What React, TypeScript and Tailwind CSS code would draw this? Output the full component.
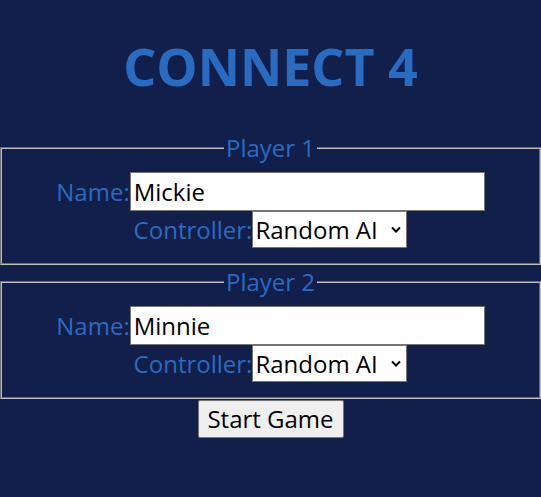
import React, { useState } from 'react';

type Player = { name: string; controller: string };

function PlayerFieldset({
  title,
  player,
  onChange,
}: {
  title: string;
  player: Player;
  onChange: (p: Player) => void;
}) {
  return (
    <fieldset className="m-0 border-2 [border-style:groove] border-[#c0c0c0] px-[18px] pt-[8px] pb-[15px]">
      <legend className="mx-auto px-[2px] text-[24px] leading-[33px]">{title}</legend>
      <div className="flex h-[39px] items-center justify-center">
        <label className="text-[24px] leading-[33px]">Name:</label>
        <input
          type="text"
          value={player.name}
          onChange={(e) => onChange({ ...player, name: e.target.value })}
          className="h-[39px] w-[355px] border border-[#767676] bg-white px-[3px] text-[24px] text-black outline-none"
        />
      </div>
      <div className="flex h-[37px] items-center justify-center">
        <label className="text-[24px] leading-[33px]">Controller:</label>
        <div className="relative h-[37px] w-[155px]">
          <select
            value={player.controller}
            onChange={(e) => onChange({ ...player, controller: e.target.value })}
            className="h-[37px] w-full appearance-none border border-[#767676] bg-white pl-[2px] pr-[24px] text-[24px] text-black outline-none"
          >
            <option>Human</option>
            <option>Random AI</option>
            <option>Smart AI</option>
          </select>
          <svg
            className="pointer-events-none absolute right-[6px] top-[15px] h-[7px] w-[10px]"
            viewBox="0 0 10 7"
            fill="none"
            stroke="#000"
            strokeWidth="2"
          >
            <path d="M1 1.5 L5 5.5 L9 1.5" />
          </svg>
        </div>
      </div>
    </fieldset>
  );
}

export default function App() {
  const [p1, setP1] = useState<Player>({ name: 'Mickie', controller: 'Random AI' });
  const [p2, setP2] = useState<Player>({ name: 'Minnie', controller: 'Random AI' });

  return (
    <div className="min-h-screen bg-[#121f4b] pt-[32px] text-center text-[#2a6bc2] font-['Comic_Sans_MS','Open_Sans',sans-serif]">
      <h1 className="mb-[32px] text-[52px] font-bold leading-[67px]">CONNECT 4</h1>
      <PlayerFieldset title="Player 1" player={p1} onChange={setP1} />
      <PlayerFieldset title="Player 2" player={p2} onChange={setP2} />
      <button className="mt-[1px] h-[38px] w-[146px] rounded-[2px] border border-[#767676] bg-[#efefef] text-[24px] text-black">
        Start Game
      </button>
    </div>
  );
}
